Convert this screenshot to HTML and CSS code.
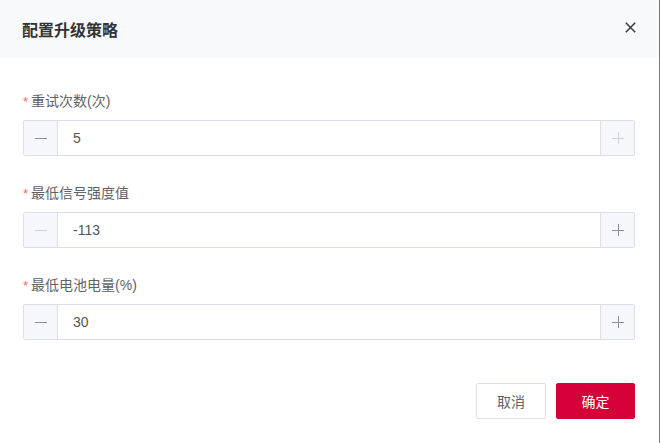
FILE: index.html
```html
<!DOCTYPE html>
<html lang="zh-CN">
<head>
<meta charset="utf-8">
<title>配置升级策略</title>
<link rel="stylesheet" href="styles.css">
</head>
<body>
<div class="dialog">
  <div class="header">
    <span class="title">配置升级策略</span>
    <button class="close" aria-label="关闭">
      <svg width="11" height="11" viewBox="0 0 11 11"><path d="M0.8 0.8L10.2 10.2M10.2 0.8L0.8 10.2" stroke="#3a3a3a" stroke-width="1.5" fill="none"/></svg>
    </button>
  </div>
  <div class="body">
    <div class="item">
      <div class="label"><span class="req">*</span>重试次数(次)</div>
      <div class="num">
        <span class="btn dec"><svg width="12" height="12" viewBox="0 0 12 12"><path d="M0 6.5H12" stroke="currentColor" stroke-width="1"/></svg></span>
        <span class="field">5</span>
        <span class="btn inc disabled"><svg width="12" height="12" viewBox="0 0 12 12"><path d="M0 6.5H12M6.5 0V12" stroke="currentColor" stroke-width="1"/></svg></span>
      </div>
    </div>
    <div class="item">
      <div class="label"><span class="req">*</span>最低信号强度值</div>
      <div class="num">
        <span class="btn dec disabled"><svg width="12" height="12" viewBox="0 0 12 12"><path d="M0 6.5H12" stroke="currentColor" stroke-width="1"/></svg></span>
        <span class="field">-113</span>
        <span class="btn inc"><svg width="12" height="12" viewBox="0 0 12 12"><path d="M0 6.5H12M6.5 0V12" stroke="currentColor" stroke-width="1"/></svg></span>
      </div>
    </div>
    <div class="item">
      <div class="label"><span class="req">*</span>最低电池电量(%)</div>
      <div class="num">
        <span class="btn dec"><svg width="12" height="12" viewBox="0 0 12 12"><path d="M0 6.5H12" stroke="currentColor" stroke-width="1"/></svg></span>
        <span class="field">30</span>
        <span class="btn inc"><svg width="12" height="12" viewBox="0 0 12 12"><path d="M0 6.5H12M6.5 0V12" stroke="currentColor" stroke-width="1"/></svg></span>
      </div>
    </div>
  </div>
  <div class="footer">
    <button class="b-cancel">取消</button>
    <button class="b-ok">确定</button>
  </div>
</div>
</body>
</html>
```

FILE: styles.css
```css
html, body {
  margin: 0;
  padding: 0;
  background: #ffffff;
}
body {
  font-family: "Liberation Sans", "Noto Sans CJK SC", sans-serif;
}
.dialog {
  width: 660px;
  height: 443px;
  box-sizing: border-box;
  border-right: 1px solid #7a7a7a;
  background: #ffffff;
}
.header {
  height: 58px;
  background: #f8f9fb;
  display: flex;
  align-items: center;
  justify-content: space-between;
  padding: 0 23px 0 22px;
}
.title {
  font-size: 16px;
  font-weight: bold;
  color: #333333;
  line-height: 20px;
  font-family: "Noto Sans CJK SC", sans-serif;
}
.close {
  border: 0;
  background: transparent;
  padding: 0;
  width: 11px;
  height: 11px;
  display: flex;
  margin-top: -3px;
}
.body {
  padding: 33px 24px 0 23px;
}
.item + .item {
  margin-top: 27px;
}
.label {
  font-size: 14px;
  line-height: 20px;
  height: 20px;
  color: #606266;
  margin-bottom: 9px;
}
.req {
  color: #f56c6c;
  margin-right: 3px;
  font-size: 13px;
}
.num {
  display: flex;
  height: 36px;
  box-sizing: border-box;
  border: 1px solid #dcdfe6;
  border-radius: 2px;
  background: #ffffff;
}
.btn {
  width: 33px;
  background: #f5f7fa;
  display: flex;
  align-items: center;
  justify-content: center;
  color: #8a8d93;
}
.btn.disabled {
  color: #cfd2d8;
}
.dec {
  border-right: 1px solid #dcdfe6;
}
.inc {
  border-left: 1px solid #dcdfe6;
}
.field {
  flex: 1;
  padding-left: 15px;
  font-size: 14px;
  line-height: 34px;
  color: #555555;
}
.footer {
  display: flex;
  justify-content: flex-end;
  gap: 10px;
  margin-top: 43px;
  padding-right: 24px;
}
.footer button {
  height: 36px;
  font-size: 14px;
  font-family: "Noto Sans CJK SC", sans-serif;
  border-radius: 2px;
  padding: 0;
  cursor: pointer;
}
.b-cancel {
  width: 70px;
  background: #ffffff;
  border: 1px solid #dcdfe6;
  color: #606266;
}
.b-ok {
  width: 79px;
  background: #d50037;
  border: 1px solid #d50037;
  color: #ffffff;
}
```
